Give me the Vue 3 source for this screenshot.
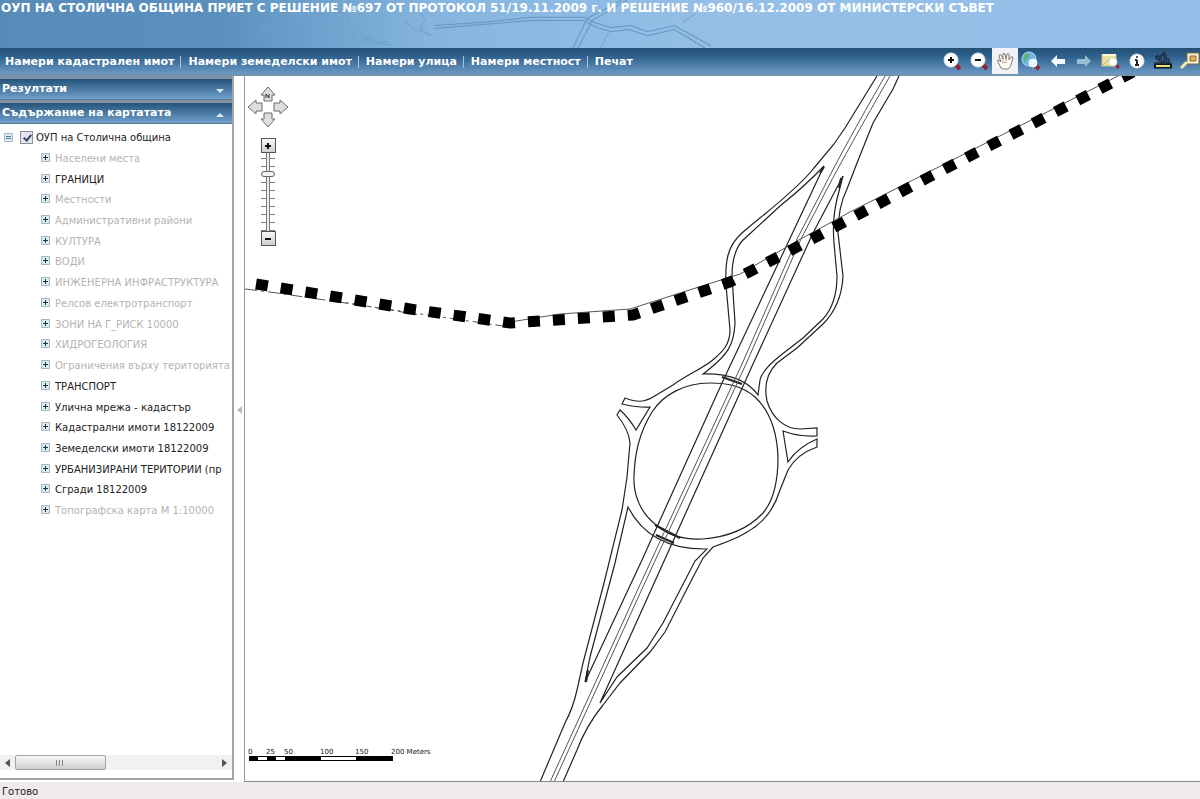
<script setup>
import {ref} from "vue";

let menu = [
    "Намери кадастрален имот",
    "Намери земеделски имот",
    "Намери улица",
    "Намери местност",
    "Печат"
];

let layers = ref([
    {name: "Населени места", on: false},
    {name: "ГРАНИЦИ", on: true},
    {name: "Местности", on: false},
    {name: "Административни райони", on: false},
    {name: "КУЛТУРА", on: false},
    {name: "ВОДИ", on: false},
    {name: "ИНЖЕНЕРНА ИНФРАСТРУКТУРА", on: false},
    {name: "Релсов електротранспорт", on: false},
    {name: "ЗОНИ НА Г_РИСК 10000", on: false},
    {name: "ХИДРОГЕОЛОГИЯ", on: false},
    {name: "Ограничения върху територията", on: false},
    {name: "ТРАНСПОРТ", on: true},
    {name: "Улична мрежа - кадастър", on: true},
    {name: "Кадастрални имоти 18122009", on: true},
    {name: "Земеделски имоти 18122009", on: true},
    {name: "УРБАНИЗИРАНИ ТЕРИТОРИИ (пр", on: true},
    {name: "Сгради 18122009", on: true},
    {name: "Топографска карта М 1:10000", on: false}
]);

let tools = ["zoomin", "zoomout", "pan", "globe", "back", "forward", "magnify", "info", "measure", "overview"];
let activeTool = ref("pan");
let allOn = ref(true);
let zoom = ref(2);

let arrows = [
    {name: "north", turn: "rotate(0 21 21)"},
    {name: "east", turn: "rotate(90 21 21)"},
    {name: "south", turn: "rotate(180 21 21)"},
    {name: "west", turn: "rotate(270 21 21)"}
];
</script>

<template>
  <div class="page">
    <header class="banner">
      <svg class="bannerArt" viewBox="0 0 1200 47" preserveAspectRatio="xMinYMin slice" aria-hidden="true">
        <g fill="none" stroke="#6795bd" stroke-width="1">
          <path d="M425 25 L470 22 L520 17 L572 17 L582 22 L598 27 L618 25 L634 31 L660 25 L675 33 L696 45" />
          <path d="M425 28 L472 24 L520 20 L572 20 L582 26 L598 31 L616 29 L634 35 L660 29 L674 37 L690 47" />
          <path d="M561 47 L575 18 L600 5 L608 0 M566 47 L580 20 L604 6 L614 0" />
          <path d="M588 47 L596 32 M668 22 L682 13" stroke="#7aa9d0" />
          <path d="M256 32 l8 -7 l9 5 l7 -9 l10 3 l-4 -9 l8 -8 M290 14 l12 6 l9 -4 l5 10 l12 -3 l7 9 l11 2 l4 9 l9 -3 l7 5 M320 2 l7 9 l11 2 l3 10 l9 3 l8 12 l13 4 l10 -2 M318 24 l9 5 l-2 6 l14 1 M352 40 l10 -4 l8 6 l14 2 M410 10 l6 9 l-5 8 l10 8 M396 20 l10 9 l16 5" stroke="#70a1ca" />
        </g>
      </svg>
      <h1>ОУП НА СТОЛИЧНА ОБЩИНА ПРИЕТ С РЕШЕНИЕ №697 ОТ ПРОТОКОЛ 51/19.11.2009 г. И РЕШЕНИЕ №960/16.12.2009 ОТ МИНИСТЕРСКИ СЪВЕТ</h1>
    </header>

    <div class="bar">
      <nav class="menu">
        <a v-for="item in menu" :key="item" href="#">{{ item }}</a>
      </nav>
      <div class="tools">
        <button v-for="tool in tools" :key="tool" type="button" :aria-label="tool" :class="{active: tool == activeTool}" @click="activeTool = tool">
          <svg viewBox="0 0 20 20" width="20" height="20">
            <g v-if="tool == 'zoomin' || tool == 'zoomout'">
              <path d="M12 12 L18 18" stroke="#8f2636" stroke-width="4" />
              <circle cx="9" cy="9" r="7" fill="#fff" stroke="#dce8f2" />
              <path d="M6 9 H12" stroke="#111" stroke-width="2" />
              <path v-if="tool == 'zoomin'" d="M9 6 V12" stroke="#111" stroke-width="2" />
            </g>
            <g v-else-if="tool == 'pan'" stroke="#847b6d" fill="#fffdf5" stroke-linejoin="round">
              <path d="M6 17 L3 11 Q2 8 4 9 L6 11 L4 5 Q4 3 6 4 L8 8 L8 3 Q9 1 10 3 L11 8 L12 3 Q14 2 14 4 L14 9 L16 6 Q18 5 18 7 L16 14 Q15 17 13 18 H8 Z" />
              <path d="M7 12 Q9 10 12 12 M8 8 V10 M11 8 V10" fill="none" stroke="#a89d8b" />
            </g>
            <g v-else-if="tool == 'globe'">
              <circle cx="8" cy="8" r="7" fill="#6fb6ea" stroke="#b6dcf5" />
              <path d="M3 4 Q6 1 9 3 L8 6 L5 8 L4 12 Q1 8 3 4 M9 8 L13 7 L12 11 L9 12 Z" fill="#5faf72" />
              <path d="M14 14 L18 18" stroke="#8f2636" stroke-width="4" />
              <circle cx="12" cy="12" r="4" fill="#e8f6ff" stroke="#fff" />
            </g>
            <path v-else-if="tool == 'back'" d="M3 10 L9 4 V8 H17 V13 H9 V16 Z" fill="#f4fbff" />
            <path v-else-if="tool == 'forward'" d="M17 10 L11 4 V8 H3 V13 H11 V16 Z" fill="#96bfd1" />
            <g v-else-if="tool == 'magnify'">
              <path d="M1 4 H15 V15 H1 Z" fill="#e9e19c" stroke="#c4c58b" />
              <path d="M1 4 H15" stroke="#fffbd2" stroke-width="2" />
              <path d="M2 14 L8 8" stroke="#b3b876" />
              <path d="M14 13 L18 17" stroke="#8f2636" stroke-width="3" />
              <circle cx="12" cy="11" r="4" fill="#fff" stroke="#d9e1d4" />
            </g>
            <g v-else-if="tool == 'info'">
              <circle cx="10" cy="10" r="7" fill="#fff" stroke="#d8e3ec" />
              <path d="M10 9 V14 M8 9 H10 M8 14 H12" stroke="#222" stroke-width="2" />
              <circle cx="10" cy="6" r="1" fill="#222" />
            </g>
            <g v-else-if="tool == 'measure'" fill="none" stroke="#101820">
              <path d="M3 5 H6 V11 M3 5 V8 H6 M8 4 H11 V11 H8 Z M9 3 L11 1 L12 4 M13 4 V11 H16 V8 H13 M1 12 H18" />
              <path d="M1 15 H19" stroke-width="5" />
              <path d="M3 15 H17" stroke="#e9e27e" stroke-width="2" />
            </g>
            <g v-else>
              <path d="M7 2 H19 V13 H7 Z" fill="#fbf4dc" stroke="#7d6a45" />
              <path d="M10 5 H16 V10 H10 Z" fill="#e2b35a" stroke="#8a6b2f" />
              <path d="M1 17 L7 11" stroke="#f5eda9" stroke-width="3" />
            </g>
          </svg>
        </button>
      </div>
    </div>

    <main class="main">
      <aside class="side">
        <button class="panelHead" type="button">Резултати
          <svg viewBox="0 0 10 6" width="10" height="6"><path d="M1 1 H9 L5 5 Z" fill="#d5e8f6" /></svg>
        </button>
        <button class="panelHead" type="button">Съдържание на картатата
          <svg viewBox="0 0 10 6" width="10" height="6"><path d="M1 5 H9 L5 1 Z" fill="#d5e8f6" /></svg>
        </button>
        <div class="tree">
          <div class="root">
            <svg viewBox="0 0 9 9" width="9" height="9"><path d="M0.5 0.5 H8.5 V8.5 H0.5 Z" fill="#dcecf3" stroke="#9db9c8" /><path d="M2 3.5 H7 M2 5.5 H7" stroke="#52798d" /></svg>
            <input id="allLayers" v-model="allOn" type="checkbox">
            <label for="allLayers">ОУП на Столична община</label>
          </div>
          <ul>
            <li v-for="layer in layers" :key="layer.name" :class="{off: !layer.on}">
              <svg viewBox="0 0 9 9" width="9" height="9"><path d="M0.5 0.5 H8.5 V8.5 H0.5 Z" fill="#dcecf3" stroke="#a3b5bf" /><path d="M2 4.5 H7 M4.5 2 V7" stroke="#1c3340" /></svg>
              <span>{{ layer.name }}</span>
            </li>
          </ul>
        </div>
        <div class="scroll">
          <button type="button" aria-label="left"><svg viewBox="0 0 5 8" width="5" height="8"><path d="M5 0 V8 L0 4 Z" fill="#555" /></svg></button>
          <div class="lane"><div class="thumb"></div></div>
          <button type="button" aria-label="right"><svg viewBox="0 0 5 8" width="5" height="8"><path d="M0 0 V8 L5 4 Z" fill="#555" /></svg></button>
        </div>
      </aside>

      <button class="splitter" type="button" aria-label="collapse">
        <svg viewBox="0 0 5 8" width="5" height="8"><path d="M5 0 V8 L0 4 Z" fill="#bbb" /></svg>
      </button>

      <section class="map">
        <svg class="drawing" viewBox="245 76 955 706" preserveAspectRatio="xMinYMin slice">
          <!-- outer road edges -->
          <g class="road">
            <path d="M877 76 L845 128 L834 144 L814 168 C795 192 760 217 742 233 C727 246 725 262 726 285 L730 330 C730 345 722 352 714 359 C704 368 688 374 673 385 L653 397 C643 403 636 402 625 398 L622 404 Q640 408 650 407 L636 430 Q629 418 620 410 L617 415 Q629 430 630 443 L627 477 L622 510 L604 583 L583 663 L577 690 Q573 708 565 723 L540 782" />
            <path d="M899 76 L893 89 L873 123 L857 163 L847 189 Q838 207 838 233 L843 276 C842 298 835 312 823 324 L797 348 L777 363 C767 373 764 387 767 401 C772 418 785 429 800 429 L817 428 V436 Q799 437 783 431 L788 462 Q798 447 817 439 V447 Q797 454 788 470 L780 490 C773 513 760 525 747 532 Q738 538 713 547 L703 558 L690 583 L665 632 L650 652 L620 683 L603 705 Q586 726 577 750 L563 782" />
          </g>
          <!-- islands between ramps and the main carriageway -->
          <g class="road">
            <path d="M824 166 Q805 186 780 206 L742 241 Q732 253 732 276 L735 323 C734 346 727 355 707 371 L703 374 Q742 373 758 395 L760 380 Q762 370 781 355 L803 338 L823 319 C833 308 837 294 837 276 L834 243 Q832 220 837 199 L843 176" />
            <path d="M843 176 L813 233 L753 364 L600 703 L617 677 L647 648 L663 623 L695 561 L707 549 Q650 550 628 507 L615 563 L590 657 L585 682 L642 560 L722 383 L777 266 L824 166" />
            <path d="M710 383 C684 383 663 395 652 412 C638 435 635 455 634 475 C633 494 640 512 655 524 C668 536 684 540 703 539 C728 537 749 528 763 513 C775 499 778 478 778 457 C777 431 769 410 755 397 C741 385 726 383 710 383 Z" />
            <path d="M841 178 L839 188 M824 167 L820 173 M588 670 L586 682 M655 525 L680 538 M656 535 L674 543 M722 377 L742 384" stroke-width="2" />
          </g>
          <path class="axis" d="M885 76 Q843 149 823 189 L797 239 L742 364 L638 589 L550 782 M890 76 Q848 149 827 189 L801 239 L746 364 L642 589 L554 782" />
          <!-- boundary -->
          <path class="thin" d="M245 289 L270 292 L510 327 M330 300 L420 315" stroke-dasharray="12 4 3 4" />
          <path class="thin" d="M510 322 L560 314 L630 309 L680 293 L740 274 L797 241 L850 212 L1122 74" />
          <path class="thick" d="M256 284 L410 309 L510 323 L633 315 L730 282 L797 247 L929 177 L1160 58" />
        </svg>

        <div class="control">
          <svg viewBox="0 0 42 42" width="42" height="42">
            <g fill="#dedede" stroke="#6c6c6c">
              <path v-for="arrow in arrows" :key="arrow.name" :transform="arrow.turn" d="M21 1 L28 9 H25 V15 H17 V9 H14 Z" />
            </g>
            <path d="M19 12 V8 L22 12 V8" fill="none" stroke="#333" />
          </svg>
          <button type="button" aria-label="zoom in"><svg viewBox="0 0 8 8" width="8" height="8"><path d="M1 4 H7 M4 1 V7" stroke="#111" stroke-width="2" /></svg></button>
          <input v-model="zoom" type="range" min="0" max="8" aria-label="zoom">
          <button type="button" aria-label="zoom out"><svg viewBox="0 0 8 8" width="8" height="8"><path d="M1 4 H7" stroke="#111" stroke-width="2" /></svg></button>
        </div>

        <svg class="scale" viewBox="0 0 190 18" width="190" height="18">
          <g class="scaleText">
            <text x="1" y="8">0</text>
            <text x="19" y="8">25</text>
            <text x="37" y="8">50</text>
            <text x="73" y="8">100</text>
            <text x="108" y="8">150</text>
            <text x="144" y="8">200 Meters</text>
          </g>
          <path d="M2 10 H146 V15 H2 Z" fill="#000" />
          <path d="M11 11 H20 V14 H11 Z M29 11 H38 V14 H29 Z M74 11 H109 V14 H74 Z" fill="#fff" />
        </svg>
      </section>
    </main>

    <footer class="status">Готово</footer>
  </div>
</template>

<style>
  body{
      margin: 0;
  }
</style>

<style scoped>
  .page{
      display: flex;
      flex-direction: column;
      min-height: 100vh;
      font-family: "DejaVu Sans", Verdana, sans-serif;
      font-size: 10px;
      color: #222;
      background: #fff;
      overflow: hidden;
  }
  button{
      font: inherit;
      border: 0;
      padding: 0;
      margin: 0;
      background: none;
  }
  svg{
      display: block;
      flex: none;
  }
  .banner{
      position: relative;
      height: 48px;
      overflow: hidden;
      background: linear-gradient(90deg, #568bba 0, #5b90be 220px, #85b5df 430px, #95bfe7 720px, #95bfe8 100%);
  }
  .bannerArt{
      position: absolute;
      inset: 0;
      width: 100%;
      height: 100%;
  }
  .banner h1{
      position: relative;
      margin: 0;
      padding-left: 1px;
      font-size: 12px;
      line-height: 16px;
      color: #fff;
      white-space: nowrap;
  }
  .bar{
      display: flex;
      justify-content: space-between;
      height: 28px;
      background: linear-gradient(#235075, #2f618c 30%, #6695c0 88%, #7793ab);
  }
  .menu{
      display: flex;
      align-items: center;
      padding-left: 5px;
      white-space: nowrap;
  }
  .menu a{
      color: #fff;
      font-size: 11px;
      font-weight: bold;
      line-height: 12px;
      text-decoration: none;
  }
  .menu a + a{
      margin-left: 6px;
      padding-left: 7px;
      border-left: 1px solid #a5c5df;
  }
  .tools{
      display: grid;
      grid-template-columns: repeat(10, 1fr);
      width: 264px;
      margin-right: -3px;
  }
  .tools button{
      display: flex;
      align-items: center;
      justify-content: center;
      height: 26px;
  }
  .tools .active{
      background: #f0f2f7;
  }
  .main{
      flex: 1;
      display: flex;
      min-height: 0;
  }
  .side{
      display: flex;
      flex-direction: column;
      width: 232px;
      margin-bottom: 2px;
      border-right: 2px solid #a2a2a2;
      border-bottom: 2px solid #a2a2a2;
  }
  .panelHead{
      display: flex;
      align-items: center;
      justify-content: space-between;
      height: 24px;
      padding: 0 7px 2px 2px;
      border-top: 3px solid #8193a2;
      border-bottom: 1px solid #5c7890;
      color: #fff;
      font-size: 11px;
      font-weight: bold;
      background: linear-gradient(#24537b, #70a0cb);
  }
  .panelHead svg{
      margin-top: 6px;
  }
  .tree{
      flex: 1;
      overflow: hidden;
      padding-top: 3px;
  }
  .root{
      display: flex;
      align-items: center;
      height: 20px;
      padding-left: 4px;
      white-space: nowrap;
  }
  .root input{
      appearance: none;
      width: 13px;
      height: 13px;
      margin: 0 3px 0 7px;
      border: 1px solid #8f8f9c;
      background: #e4e6ee;
  }
  .root input:checked::before{
      content: "";
      display: block;
      width: 3px;
      height: 6px;
      margin: 1px 0 0 4px;
      border: solid #39436f;
      border-width: 0 2px 2px 0;
      transform: rotate(40deg);
  }
  .tree ul{
      display: grid;
      grid-auto-rows: 1fr;
      min-height: 373px;
      margin: 0;
      padding: 0 0 0 41px;
      list-style: none;
  }
  .tree li{
      display: flex;
      align-items: center;
      white-space: nowrap;
  }
  .tree li span{
      margin: 2px 0 0 5px;
  }
  .off{
      color: #b4b4b4;
  }
  .scroll{
      display: flex;
      height: 15px;
      margin-bottom: 8px;
      background: #f1f1f1;
  }
  .scroll button{
      display: flex;
      align-items: center;
      justify-content: center;
      width: 15px;
  }
  .lane{
      flex: 1;
      display: flex;
  }
  .thumb{
      box-sizing: border-box;
      width: 45%;
      border: 1px solid #a3a3a3;
      border-radius: 2px;
      background: repeating-linear-gradient(90deg, #888 0 1px, transparent 1px 3px) center / 8px 6px no-repeat, linear-gradient(#f6f6f6, #cfcfcf);
  }
  .splitter{
      display: flex;
      align-items: center;
      justify-content: center;
      width: 10px;
      padding-bottom: 38px;
  }
  .map{
      position: relative;
      flex: 1;
      border-left: 1px solid #999;
      border-bottom: 1px solid #888;
      overflow: hidden;
  }
  .drawing{
      position: absolute;
      inset: 0;
      width: 100%;
      height: 100%;
  }
  .road{
      fill: none;
      stroke: #222;
      stroke-width: 1.2;
  }
  .axis{
      fill: none;
      stroke: #555;
      stroke-width: 1;
  }
  .thin{
      fill: none;
      stroke: #555;
      stroke-width: 1;
  }
  .thick{
      fill: none;
      stroke: #000;
      stroke-width: 11;
      stroke-dasharray: 12 13;
  }
  .control{
      position: absolute;
      left: 2px;
      top: 10px;
      display: flex;
      flex-direction: column;
      align-items: center;
  }
  .control button{
      box-sizing: border-box;
      display: flex;
      align-items: center;
      justify-content: center;
      width: 15px;
      height: 15px;
      border: 1px solid #555;
      background: linear-gradient(#f7f7f7, #cfcfcf);
  }
  .control svg + button{
      margin-top: 10px;
  }
  .control input{
      appearance: none;
      writing-mode: vertical-lr;
      width: 14px;
      height: 78px;
      margin: 0;
      background: linear-gradient(90deg, transparent 5px, #777 5px 6px, #eee 6px 8px, #777 8px 9px, transparent 9px), repeating-linear-gradient(transparent 0 5px, #777 5px 6px, transparent 6px 8px);
  }
  .control input::-webkit-slider-thumb{
      appearance: none;
      box-sizing: border-box;
      width: 14px;
      height: 6px;
      border: 1px solid #666;
      border-radius: 3px;
      background: #f2f2f2;
  }
  .scale{
      position: absolute;
      left: 2px;
      bottom: 17px;
  }
  .scaleText{
      font-size: 7px;
      fill: #111;
  }
  .status{
      height: 17px;
      padding-left: 2px;
      line-height: 20px;
      background: #efebeb;
  }
</style>
